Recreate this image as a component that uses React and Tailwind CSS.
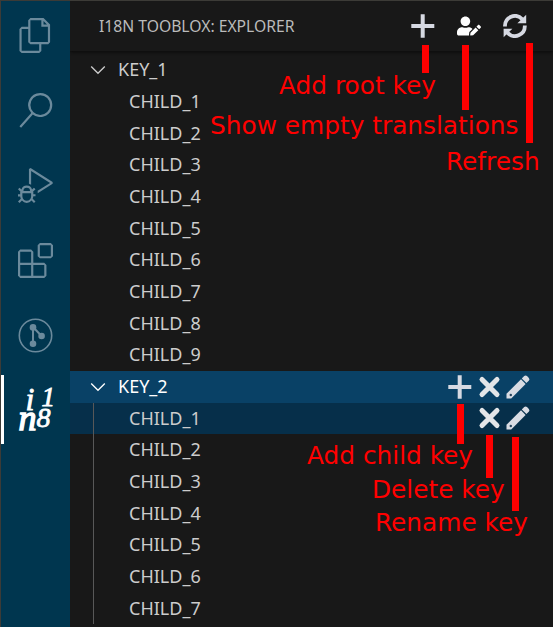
import React from "react";
import { VscFiles, VscSearch, VscDebugAlt, VscExtensions } from "react-icons/vsc";
import { FaUserEdit } from "react-icons/fa";

const children = (n) => Array.from({ length: n }, (_, i) => `CHILD_${i + 1}`);

function Chevron() {
  return (
    <svg className="h-4 w-4 shrink-0" viewBox="0 0 16 16" fill="none" stroke="currentColor" strokeWidth="1.3">
      <path d="M1.2 4.5L8 11.3L14.8 4.5" />
    </svg>
  );
}

function Plus() {
  return (
    <svg className="h-6 w-6" viewBox="0 0 24 24" fill="none" stroke="#d6d9e2" strokeWidth="4">
      <path d="M.3 12H23.3M11.7 .3V23.7" />
    </svg>
  );
}

function Cross() {
  return (
    <svg className="h-6 w-6" viewBox="0 0 24 24" fill="none" stroke="#e3e5e8" strokeWidth="5" strokeLinecap="round">
      <path d="M5 4.5L20 19.5M20 4.5L5 19.5" />
    </svg>
  );
}

function Pencil() {
  return (
    <svg className="h-6 w-6" viewBox="0 0 24 24" fill="#d9dce3">
      <path d="M.5 18.8L15 4.3L19.6 8.9L5.2 23.5H.5Z" />
      <path d="M15.8 3.5L18.2 1.1Q19.5 0 21 1L22.9 2.9Q24 4.3 22.8 5.7L20.4 8.1Z" />
      <circle cx="4.8" cy="20" r="1.2" fill="#24435c" />
    </svg>
  );
}

function Refresh() {
  return (
    <svg className="h-6 w-6" viewBox="0 0 24 24" fill="none" stroke="#d6d9e2" strokeWidth="3.8">
      <path d="M2 12.5A10 10 0 0 1 19.3 5.2" />
      <path d="M23.2 .8V9.2H14.4Z" fill="#d6d9e2" stroke="none" />
      <path d="M21.8 11.5A10 10 0 0 1 4.5 18.8" />
      <path d="M.6 23.2V14.8H9.4Z" fill="#d6d9e2" stroke="none" />
    </svg>
  );
}

function GitGraph() {
  return (
    <svg className="h-[35px] w-[35px]" viewBox="0 0 35 35" fill="none" stroke="currentColor" strokeWidth="1.6">
      <circle cx="17.5" cy="17.5" r="16.2" />
      <path d="M15 9V26M15 9L23.5 18" strokeWidth="2" />
      <g fill="currentColor" stroke="none">
        <circle cx="15" cy="9.4" r="3.3" />
        <circle cx="23.6" cy="18" r="3.3" />
        <circle cx="15" cy="25.7" r="3.3" />
      </g>
    </svg>
  );
}

function I18nMark() {
  return (
    <div className="flex w-[40px] flex-col pb-[4px] pl-[3px] font-['Liberation_Serif',serif] italic text-white [-webkit-text-stroke:0.8px_#fff]">
      <div className="flex h-[19px] items-end gap-[7px] pl-[7px]">
        <span className="text-[32px] leading-[18px]">i</span>
        <span className="mb-[1px] text-[27px] leading-[20px]">1</span>
      </div>
      <div className="flex h-[20px] items-end">
        <span className="text-[36px] leading-[20px] [-webkit-text-stroke:1.4px_#fff]">n</span>
        <span className="text-[28px] leading-[21px]">8</span>
      </div>
    </div>
  );
}

function Activity({ active, children }) {
  return (
    <div
      className={
        active
          ? "flex h-[75px] items-center justify-center text-white"
          : "flex h-[75px] items-center justify-center text-[#6b8a9c]"
      }
    >
      {children}
    </div>
  );
}

function ChildRow({ name, hovered, guide }) {
  return (
    <div className={hovered ? "flex h-[31.68px] items-center bg-[#062f4a]" : "flex h-[31.68px] items-center"}>
      <div className={guide ? "ml-[23px] h-full w-px bg-[#585858]" : "ml-[23px] h-full w-px"} />
      <span className="ml-[35px] flex-1 pb-[1.6px]">{name}</span>
      {hovered && (
        <div className="mr-[23px] flex gap-[5px]">
          <Cross />
          <Pencil />
        </div>
      )}
    </div>
  );
}

function KeyRow({ name, selected }) {
  return (
    <div
      className={
        selected
          ? "flex h-[31.68px] items-center bg-[#094166] pl-[20px] text-white"
          : "flex h-[31.68px] items-center pl-[20px]"
      }
    >
      <Chevron />
      <span className="ml-[12px] flex-1 pb-[1.6px]">{name}</span>
      {selected && (
        <div className="mr-[23px] flex gap-[5px]">
          <Plus />
          <Cross />
          <Pencil />
        </div>
      )}
    </div>
  );
}

function Note({ className, children }) {
  return (
    <span className={`absolute whitespace-nowrap font-['DejaVu_Sans',sans-serif] text-[24.8px] leading-[30px] text-[#ff0000] ${className}`}>
      {children}
    </span>
  );
}

function Marker({ className }) {
  return <div className={`absolute w-[7px] bg-[#ff0000] ${className}`} />;
}

export default function App() {
  return (
    <div className="relative flex h-[627px] w-[553px] overflow-hidden border-l border-t border-[#3c3b37] bg-[#181818] font-['Noto_Sans',sans-serif]">
      <nav className="relative flex w-[69px] shrink-0 flex-col bg-[#00364f]">
        <div className="-mt-[3px] flex flex-col">
          <Activity><VscFiles size={35} /></Activity>
          <Activity><VscSearch size={35} /></Activity>
          <Activity><VscDebugAlt size={35} /></Activity>
          <Activity><VscExtensions size={35} /></Activity>
          <Activity><GitGraph /></Activity>
          <Activity active><I18nMark /></Activity>
        </div>
        <div className="absolute left-0 top-[374px] h-[69px] w-[3px] bg-white" />
      </nav>
      <main className="flex min-w-0 flex-1 flex-col">
        <header className="flex h-[50px] shrink-0 items-center pl-[29px] shadow-[0_1px_3px_#0a0a0a]">
          <h1 className="flex-1 whitespace-nowrap pt-[1px] text-[15.7px] text-[#bbbbbb]">I18N TOOBLOX: EXPLORER</h1>
          <div className="mr-[26px] flex items-center gap-[22px]">
            <Plus />
            <FaUserEdit size={24} color="#fff" />
            <Refresh />
          </div>
        </header>
        <section className="pt-[3.2px] text-[18px] leading-6 text-[#cccccc]">
          <KeyRow name="KEY_1" />
          {children(9).map((name) => <ChildRow key={name} name={name} />)}
          <KeyRow name="KEY_2" selected />
          {children(7).map((name, i) => <ChildRow key={name} name={name} hovered={i === 0} guide />)}
        </section>
      </main>

      <Marker className="left-[421px] top-[44px] h-[28px]" />
      <Marker className="left-[461px] top-[44px] h-[65px]" />
      <Marker className="left-[525px] top-[42px] h-[100px]" />
      <Marker className="left-[456px] top-[403px] h-[40px]" />
      <Marker className="left-[485px] top-[434px] h-[43px]" />
      <Marker className="left-[511px] top-[436px] h-[74px]" />
      <Note className="left-[278px] top-[70px]">Add root key</Note>
      <Note className="left-[209px] top-[110px]">Show empty translations</Note>
      <Note className="left-[445px] top-[146px]">Refresh</Note>
      <Note className="left-[306px] top-[440px]">Add child key</Note>
      <Note className="left-[371px] top-[474px]">Delete key</Note>
      <Note className="left-[374px] top-[507px]">Rename key</Note>
    </div>
  );
}
